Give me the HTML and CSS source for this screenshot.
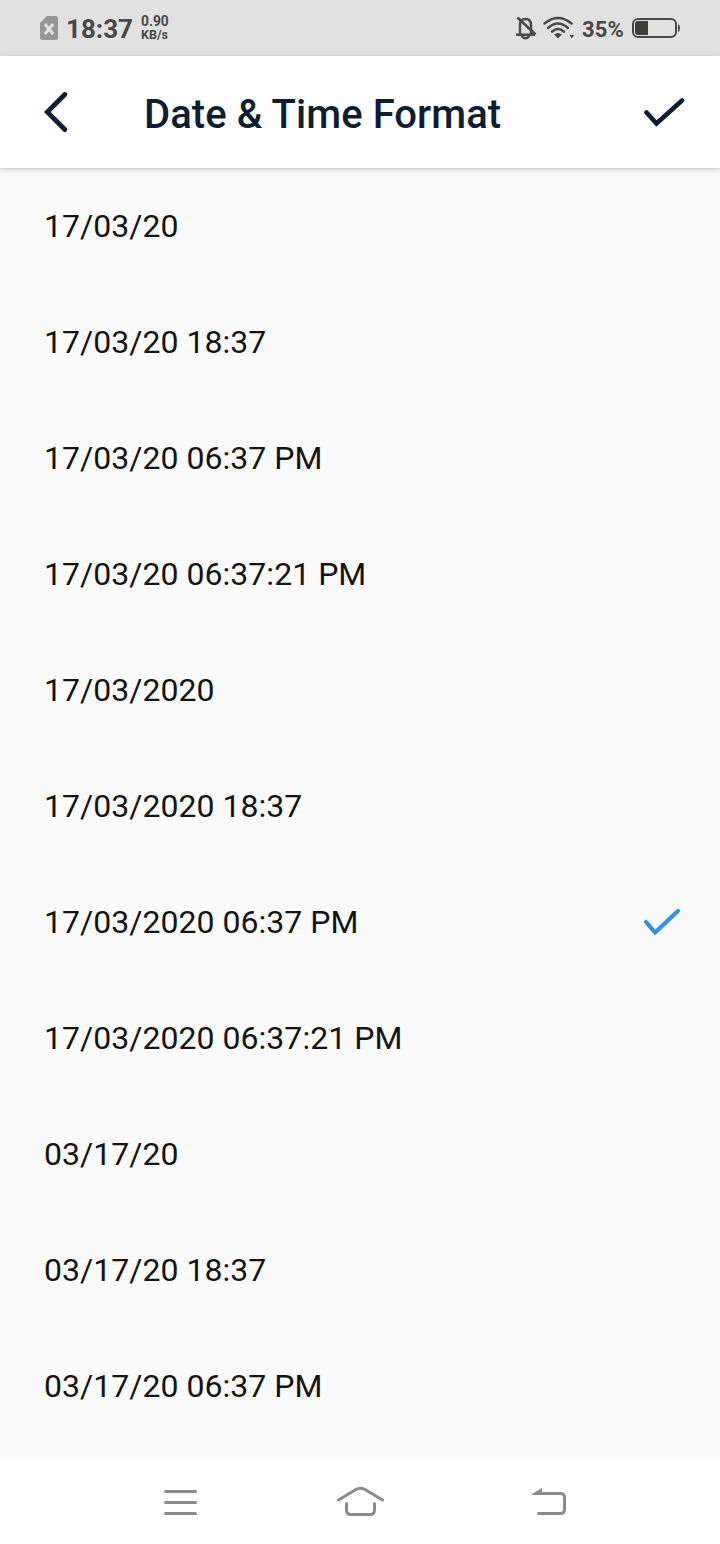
FILE: index.html
```html
<!DOCTYPE html>
<html lang="en">
<head>
  <meta charset="UTF-8">
  <meta name="viewport" content="width=device-width, initial-scale=1.0">
  <title>Date &amp; Time Format</title>
  <link rel="stylesheet" href="styles.css">
</head>
<body>
  <!-- Status bar -->
  <div class="status-bar">
    <svg class="sim" width="18" height="24" viewBox="0 0 18 24">
      <path d="M7 0H15.500Q18 0 18 2.500V21.500Q18 24 15.500 24H2.500Q0 24 0 21.500V7Z" fill="#969696"/>
      <path d="M4.800 8L13.200 18M13.200 8L4.800 18" stroke="#e1e1e1" stroke-width="3"/>
    </svg>
    <span class="clock">18:37</span>
    <span class="speed"><span class="rate">0.90</span><span>KB/s</span></span>
    <div class="status-right">
      <svg class="bell" width="22" height="24" viewBox="0 0 22 24" fill="none" stroke="#484848" stroke-width="2.500">
        <path d="M5 18V9Q5 3 10.500 3Q16 3 16 9V18"/>
        <path d="M1 18.700H20"/>
        <path d="M6.500 20Q10.500 24.500 14.500 20"/>
        <path d="M2.500 1.500L20.500 18.500" stroke-width="2.600"/>
      </svg>
      <svg class="wifi" width="32" height="24" viewBox="0 0 32 24" fill="none" stroke="#484848" stroke-width="2.500" stroke-linecap="round">
        <path d="M1.500 7.500Q15 -3.500 28.500 7.500"/>
        <path d="M5 12Q15 3 25 12"/>
        <path d="M9 15.700Q15 10.300 21 15.700"/>
        <path d="M11 18.500Q15 15.300 19 18.500L15 22.500Z" fill="#484848" stroke="none"/>
        <path d="M26.500 19H31L28.700 22.500Z" fill="#484848" stroke="none"/>
      </svg>
      <span class="percent">35%</span>
      <svg class="battery" width="48" height="20" viewBox="0 0 48 20">
        <rect x="1" y="1" width="43" height="18" rx="5" fill="none" stroke="#484848" stroke-width="2"/>
        <path d="M16 3H6Q3 3 3 6V14Q3 17 6 17H16Z" fill="#3f3f3a"/>
        <path d="M46 6Q48 7 48 10Q48 13 46 14Z" fill="#484848"/>
      </svg>
    </div>
  </div>

  <!-- Title bar -->
  <div class="header">
    <svg class="back" width="24" height="42" viewBox="0 0 24 42">
      <path d="M20.800 3.500L3.300 21L20.800 38.500" fill="none" stroke="#0f1d33" stroke-width="4.800" stroke-linecap="round"/>
    </svg>
    <h1>Date &amp; Time Format</h1>
    <svg class="save" width="42" height="30" viewBox="0 0 42 30">
      <path d="M3.500 15.500L13.500 26.500L39 3.500" fill="none" stroke="#0f1d33" stroke-width="4.600" stroke-linecap="round"/>
    </svg>
  </div>

  <!-- Formats -->
  <ul class="formats">
    <li>17/03/20</li>
    <li>17/03/20 18:37</li>
    <li>17/03/20 06:37 PM</li>
    <li>17/03/20 06:37:21 PM</li>
    <li>17/03/2020</li>
    <li>17/03/2020 18:37</li>
    <li>17/03/2020 06:37 PM
      <svg width="38" height="28" viewBox="0 0 38 28">
        <path d="M3 14L12 24.500L35 3" fill="none" stroke="#2b95e9" stroke-width="4.200" stroke-linecap="round"/>
      </svg>
    </li>
    <li>17/03/2020 06:37:21 PM</li>
    <li>03/17/20</li>
    <li>03/17/20 18:37</li>
    <li>03/17/20 06:37 PM</li>
  </ul>

  <!-- Navigation bar -->
  <div class="nav-bar">
    <svg width="34" height="26" viewBox="0 0 34 26">
      <path d="M2.500 2.500H32.500M2.500 13.500H32.500M2.500 24.500H32.500"/>
    </svg>
    <svg class="home" width="48" height="32" viewBox="0 0 48 32">
      <path d="M1.500 14L18.500 3.700Q23.500 .8 28.500 3.700L45.500 14"/>
      <path d="M9.500 17.500V24Q9.500 28.500 14 28.500H33Q37.500 28.500 37.500 24V17.500"/>
    </svg>
    <svg width="36" height="30" viewBox="0 0 36 30">
      <path d="M5 6.500H28.500Q32.500 6.500 32.500 10.500V22.500Q32.500 26.500 28.500 26.500H6.500"/>
      <path class="arrow" d="M0 7L10 1V8H0Z"/>
    </svg>
  </div>
</body>
</html>
```

FILE: styles.css
```css
body {
  font-family: Roboto, sans-serif;
  margin: 0;
  height: 1544px;
  display: flex;
  flex-direction: column;
  background-color: #fafafa;
  overflow: hidden;
}
svg {
  display: block;
  flex: none;
}
/* Status bar */
.status-bar {
  box-sizing: border-box;
  height: 56px;
  padding: 0 40px;
  display: flex;
  align-items: center;
  background-color: #e1e1e1;
  color: #484848;
  font-weight: bold;
}
.clock {
  margin-left: 8px;
  padding-top: 2px;
  font-size: 26px;
}
.speed {
  display: flex;
  flex-direction: column;
  margin-left: 8px;
  font-size: 12.500px;
  line-height: 13px;
}
.rate {
  font-size: 13.800px;
}
.status-right {
  margin-left: auto;
  display: flex;
  align-items: center;
}
.wifi {
  margin-left: 6px;
}
.percent {
  margin: 0 8px 0 7px;
  padding-top: 2px;
  font-size: 22px;
  letter-spacing: 0.200px;
}
/* Title bar */
.header {
  box-sizing: border-box;
  height: 112px;
  padding: 0 35px 0 44px;
  display: flex;
  align-items: center;
  background-color: #fff;
  box-shadow: 0 1px 2px rgba(0, 0, 0, 0.12), 0 2px 8px rgba(0, 0, 0, 0.1);
  z-index: 1;
}
h1 {
  margin: 5px 0 0 76px;
  color: #0f1d33;
  font-size: 40px;
  font-weight: 500;
  letter-spacing: 0.070px;
}
.save {
  margin-left: auto;
}
/* Format list */
.formats {
  margin: 0;
  padding: 0;
  list-style: none;
  flex: 1;
}
.formats li {
  display: flex;
  align-items: center;
  justify-content: space-between;
  height: 116px;
  padding: 0 39px 0 44px;
  color: #141414;
  font-size: 32px;
  letter-spacing: 0.030px;
}
/* Navigation bar */
.nav-bar {
  box-sizing: border-box;
  height: 84px;
  padding: 0 152px 0 163px;
  display: grid;
  grid-template-columns: 34px 1fr 36px;
  align-items: center;
  background-color: #fff;
}
.nav-bar path {
  fill: none;
  stroke: #8b8b8b;
  stroke-width: 3;
  stroke-linecap: round;
}
.nav-bar .arrow {
  fill: #8b8b8b;
  stroke: none;
}
.home {
  margin-left: 140px;
}
```
